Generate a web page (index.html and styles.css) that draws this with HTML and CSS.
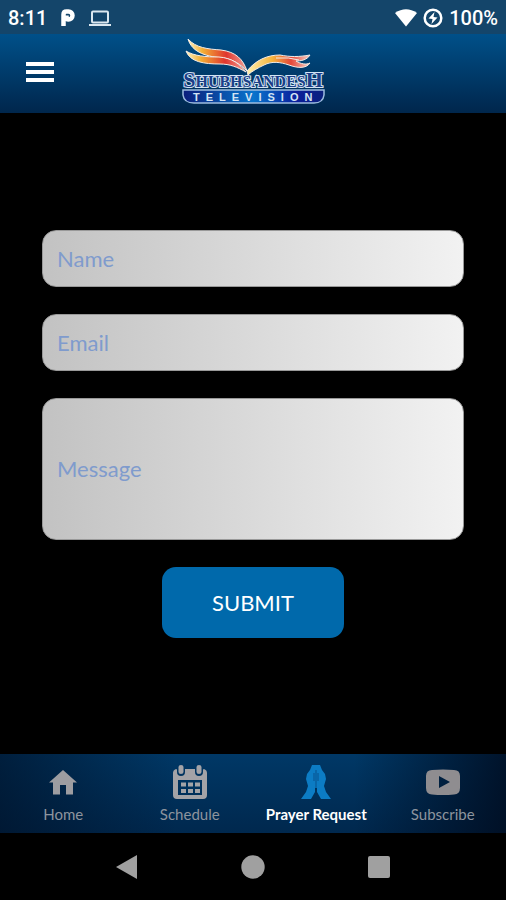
FILE: index.html
```html
<!DOCTYPE html>
<html lang="en">
<head>
    <meta charset="UTF-8">
    <meta name="viewport" content="width=device-width, initial-scale=1.0">
    <title>Prayer Request</title>
    <link rel="stylesheet" href="styles.css">
</head>
<body>
    <div class="status-bar">
        <div class="status-group">
            <span>8:11</span>
            <svg width="14" height="18" viewBox="0 0 14 18">
                <path d="M2.500 17V5.500Q2.500 2.500 5.500 2.500H7.500A4 4 0 0 1 7.500 10.500Q5.500 10.500 5.500 8.500V6.500" fill="none" stroke="#fff" stroke-width="4.500"/>
            </svg>
            <svg width="22" height="17" viewBox="0 0 22 17">
                <rect x="3" y="1.500" width="16" height="11" rx="1" fill="none" stroke="#dce8f0" stroke-width="2"/>
                <path d="M0 14h22v2H0z" fill="#dce8f0"/>
            </svg>
        </div>
        <div class="status-group status-right">
            <svg width="22" height="18" viewBox="0 0 22 18">
                <path d="M0 4Q11-3.500 22 4L11 17.500z" fill="#fff"/>
            </svg>
            <svg width="20" height="20" viewBox="0 0 20 20">
                <circle cx="10" cy="10" r="8.300" fill="none" stroke="#fff" stroke-width="2.500"/>
                <path d="M11.500 4L5.500 10.500L9.500 11L8.500 16L14.500 9.500L10.500 9z" fill="#fff"/>
            </svg>
            <span>100%</span>
        </div>
    </div>

    <header class="header">
        <button type="button" class="menu-button" aria-label="Menu">
            <svg width="28" height="22" viewBox="0 0 28 22">
                <path d="M0 1h28v4H0zM0 9h28v4H0zM0 17h28v4H0z" fill="#fff"/>
            </svg>
        </button>
        <svg class="logo" width="144" height="70" viewBox="0 0 144 70">
            <defs>
                <linearGradient id="leftWing">
                    <stop offset="0" stop-color="#fff3c0"/>
                    <stop offset="0.25" stop-color="#f3ae35"/>
                    <stop offset="0.65" stop-color="#e0352e"/>
                    <stop offset="1" stop-color="#f0a39a"/>
                </linearGradient>
                <linearGradient id="rightWing">
                    <stop offset="0" stop-color="#fff0b0"/>
                    <stop offset="0.4" stop-color="#f5b43c"/>
                    <stop offset="0.7" stop-color="#e4483a"/>
                    <stop offset="1" stop-color="#f6d2c8"/>
                </linearGradient>
                <linearGradient id="band">
                    <stop offset="0" stop-color="#0b1f7c"/>
                    <stop offset="0.5" stop-color="#0874cc"/>
                    <stop offset="0.8" stop-color="#0b1f9c"/>
                    <stop offset="1" stop-color="#0b1f7c"/>
                </linearGradient>
            </defs>
            <g stroke="#f4ece6" stroke-width="1">
                <path d="M7 2C15 11 27 12 40 13C55 15 62 22 66 34C59 27 53 23 43 21C27 20 11 16 7 2z" fill="url(#leftWing)"/>
                <path d="M5 14C13 19 25 20 38 20C51 21 59 27 65 35C56 30 49 27 39 27C23 27 9 25 5 14z" fill="url(#leftWing)"/>
                <path d="M66 34C75 23 86 18 99 18C109 20 118 20 129 18C126 23 120 24 115 24C120 27 125 28 129 26C125 32 116 31 108 28C99 25 91 24 83 28C77 31 71 34 67 38z" fill="url(#rightWing)"/>
                <path d="M95 21Q108 20 118 23" fill="none"/>
            </g>
            <path d="M2 53H143V58Q142 66 133 66H13Q3 66 2 58z" fill="url(#band)" stroke="#9dbde0" stroke-width="1.500"/>
            <text class="logo-name" x="72" y="50" text-anchor="middle"><tspan class="logo-cap">S</tspan>HUBHSANDES<tspan class="logo-cap">H</tspan></text>
            <text class="logo-sub" x="12" y="64">TELEVISION</text>
        </svg>
    </header>

    <main class="content">
        <form class="request-form">
            <input type="text" class="field" name="name" placeholder="Name" aria-label="Name">
            <input type="email" class="field" name="email" placeholder="Email" aria-label="Email">
            <textarea class="field field-message" name="message" placeholder="Message" aria-label="Message"></textarea>
            <button type="submit" class="submit-button">SUBMIT</button>
        </form>
    </main>

    <nav class="tab-bar">
        <a href="#" class="tab">
            <svg width="36" height="36" viewBox="0 0 36 36">
                <path d="M18 6L4 18.500H8V30.500H15V21H21V30.500H28V18.500H32z" fill="#9d9da1"/>
            </svg>
            <span>Home</span>
        </a>
        <a href="#" class="tab">
            <svg width="36" height="36" viewBox="0 0 36 36">
                <path fill-rule="evenodd" d="M4 5Q5 5 5 6V8Q5 12 9 12Q13 12 13 8V5H23V8Q23 12 27 12Q31 12 31 8V6Q31 5 32 5Q35 6 35 9V31Q35 35 31 35H5Q1 35 1 31V9Q1 6 4 5zM6 16V31H30V16z" fill="#a3a3a7"/>
                <path d="M6.500 3Q6.500 1 9 1Q11.500 1 11.500 3V8Q11.500 10 9 10Q6.500 10 6.500 8zM24.500 3Q24.500 1 27 1Q29.500 1 29.500 3V8Q29.500 10 27 10Q24.500 10 24.500 8zM9 18.500h5v4H9zM16 18.500h5v4h-5zM23 18.500h5v4h-5zM9 25h5v4H9zM16 25h5v4h-5zM23 25h5v4h-5z" fill="#a3a3a7"/>
            </svg>
            <span>Schedule</span>
        </a>
        <a href="#" class="tab tab-active">
            <svg width="36" height="36" viewBox="0 0 36 36">
                <path d="M14 1H22L24 6L27 10L28 15L26 22L28 28L33 35H23L19 28V24H17V28L13 35H3L8 28L10 22L8 15L9 10L12 6z" fill="#0c7cc4"/>
                <path d="M18 6V24M16 9V17M20 9V17" stroke="#07518c" stroke-width="1"/>
            </svg>
            <span>Prayer Request</span>
        </a>
        <a href="#" class="tab">
            <svg width="36" height="36" viewBox="0 0 36 36">
                <path fill-rule="evenodd" d="M7 6Q18 5 29 6Q35 6 35 12V24Q35 30 29 30.500Q18 31.500 7 30.500Q1 30 1 24V12Q1 6 7 6zM14 12V24L25 18z" fill="#8f8d90"/>
            </svg>
            <span>Subscribe</span>
        </a>
    </nav>

    <div class="system-nav">
        <button type="button" class="system-button" aria-label="Back">
            <svg width="24" height="24" viewBox="0 0 24 24"><path d="M22 0V24L1 12z" fill="#a0a0a0"/></svg>
        </button>
        <button type="button" class="system-button" aria-label="Home screen">
            <svg width="24" height="24" viewBox="0 0 24 24"><circle cx="12" cy="12" r="11.700" fill="#a0a0a0"/></svg>
        </button>
        <button type="button" class="system-button" aria-label="Recent apps">
            <svg width="24" height="24" viewBox="0 0 24 24"><rect x="1" y="1" width="22" height="22" rx="2" fill="#a0a0a0"/></svg>
        </button>
    </div>
</body>
</html>
```
FILE: styles.css
```css
* {
    box-sizing: border-box;
}
body {
    display: flex;
    flex-direction: column;
    min-height: 100vh;
    margin: 0;
    background-color: #000;
    color: white;
    font-family: Lato, sans-serif;
}
button {
    padding: 0;
    border: none;
    background: none;
    font-family: inherit;
    cursor: pointer;
}
svg {
    display: block;
}

/* status bar */
.status-bar {
    display: flex;
    justify-content: space-between;
    align-items: center;
    height: 34px;
    padding: 2px 8px 0;
    background-color: #14456a;
    font-family: Roboto, sans-serif;
    font-size: 20px;
    font-weight: 500;
}
.status-group {
    display: flex;
    align-items: center;
    gap: 14px;
}
.status-right {
    gap: 6px;
}

/* header */
.header {
    display: grid;
    grid-template-columns: 1fr auto 1fr;
    align-items: center;
    height: 79px;
    padding: 0 26px 3px;
    background: linear-gradient(#005089, #00264c);
}
.menu-button {
    justify-self: start;
}
.logo-name {
    font-family: "Liberation Serif", serif;
    font-size: 16px;
    font-weight: bold;
    fill: #1c3f88;
    stroke: #d4e4f4;
    stroke-width: 2px;
    paint-order: stroke;
}
.logo-cap {
    font-size: 22px;
}
.logo-sub {
    font-family: "Liberation Sans", sans-serif;
    font-size: 11px;
    font-weight: bold;
    letter-spacing: 6px;
    fill: #d4e4f4;
}

/* form */
.content {
    display: flex;
    flex: 1;
    flex-direction: column;
    justify-content: center;
    padding: 0 42px;
}
.request-form {
    display: flex;
    flex-direction: column;
    gap: 27px;
}
.field {
    width: 100%;
    height: 57px;
    padding: 0 14px;
    border: 1px solid #999;
    border-radius: 14px;
    background: linear-gradient(to right, #c2c2c2, #f2f2f2) border-box;
    color: #2d5ca8;
    font-family: inherit;
    font-size: 22px;
    line-height: 28px;
}
.field::placeholder {
    color: #7f9bcd;
    opacity: 1;
}
.field-message {
    display: block;
    height: 142px;
    padding: 56px 14px;
    resize: none;
}
.submit-button {
    align-self: center;
    padding: 21px 50px;
    border-radius: 14px;
    background-color: #0069ab;
    color: white;
    font-size: 22px;
    line-height: 29px;
}

/* bottom tabs */
.tab-bar {
    display: flex;
    height: 79px;
    padding-top: 10px;
    background: linear-gradient(to right, rgba(0, 14, 34, 0.6), transparent 35%, transparent 70%, rgba(0, 10, 28, 0.8)), linear-gradient(#003866, #00284e);
}
.tab {
    display: flex;
    flex: 1;
    flex-direction: column;
    align-items: center;
    gap: 4px;
    color: #8d949e;
    font-size: 15px;
    line-height: 20px;
    text-decoration: none;
    white-space: nowrap;
}
.tab-active {
    color: white;
    font-weight: bold;
}

/* android navigation */
.system-nav {
    display: flex;
    justify-content: center;
    align-items: center;
    gap: 102px;
    height: 67px;
}
```
